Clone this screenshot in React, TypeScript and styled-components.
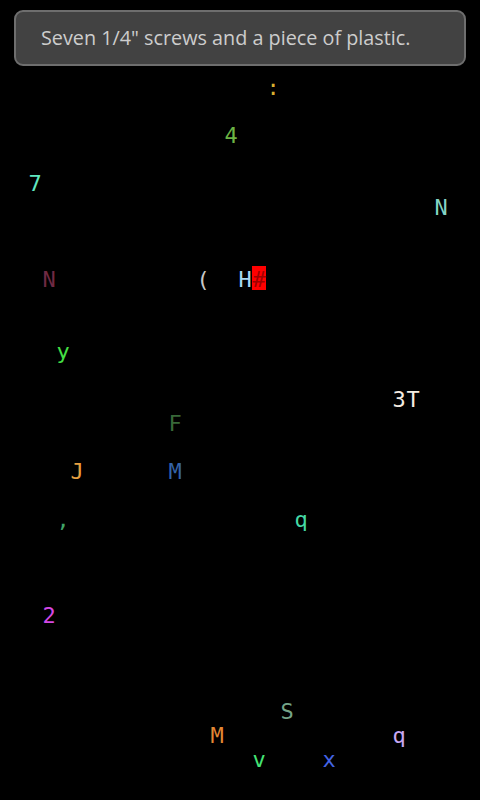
import React from 'react';
import styled, { createGlobalStyle } from 'styled-components';

interface Item {
  ch: string;
  col: number;
  row: number;
  color: string;
  kitten?: boolean;
}

const items: Item[] = [
  { ch: ':', col: 19, row: 3, color: '#d8b030' },
  { ch: '4', col: 16, row: 5, color: '#6cb444' },
  { ch: '7', col: 2, row: 7, color: '#60e8c0' },
  { ch: 'N', col: 31, row: 8, color: '#84d4c4' },
  { ch: 'N', col: 3, row: 11, color: '#702a44' },
  { ch: '(', col: 14, row: 11, color: '#c8c8c8' },
  { ch: 'H', col: 17, row: 11, color: '#a8d8f4' },
  { ch: '#', col: 18, row: 11, color: '#a00000', kitten: true },
  { ch: 'y', col: 4, row: 14, color: '#44e044' },
  { ch: '3', col: 28, row: 16, color: '#f4ece0' },
  { ch: 'T', col: 29, row: 16, color: '#f4ece0' },
  { ch: 'F', col: 12, row: 17, color: '#386838' },
  { ch: 'J', col: 5, row: 19, color: '#e8a040' },
  { ch: 'M', col: 12, row: 19, color: '#3464a8' },
  { ch: ',', col: 4, row: 21, color: '#40a468' },
  { ch: 'q', col: 21, row: 21, color: '#44d8a4' },
  { ch: '2', col: 3, row: 25, color: '#d448e4' },
  { ch: 'S', col: 20, row: 29, color: '#74a488' },
  { ch: 'M', col: 15, row: 30, color: '#e48834' },
  { ch: 'q', col: 28, row: 30, color: '#c8a8f4' },
  { ch: 'v', col: 18, row: 31, color: '#44e474' },
  { ch: 'x', col: 23, row: 31, color: '#4464e4' },
];

const App = () => {
  return (
    <Screen>
      <GlobalStyle />
      <Field>
        {items.map((it, i) => (
          <Cell key={i} $col={it.col} $row={it.row} $color={it.color} $kitten={it.kitten}>
            {it.ch}
          </Cell>
        ))}
      </Field>
      <Toast>Seven 1/4" screws and a piece of plastic.</Toast>
    </Screen>
  );
};

export default App;

const GlobalStyle = createGlobalStyle`
  html, body {
    margin: 0;
    padding: 0;
    background: #000;
  }
`;

const Screen = styled.div`
  position: relative;
  width: 480px;
  height: 800px;
  overflow: hidden;
  background: #000;
`;

const Field = styled.div`
  display: grid;
  grid-template-columns: repeat(34, 14px);
  grid-template-rows: repeat(33, 24px);
  padding-top: 2px;
`;

const Cell = styled.span<{ $col: number; $row: number; $color: string; $kitten?: boolean }>`
  grid-column: ${(p) => p.$col + 1};
  grid-row: ${(p) => p.$row + 1};
  display: flex;
  align-items: center;
  justify-content: center;
  padding-top: 4px;
  box-sizing: border-box;
  font-family: 'DejaVu Sans Mono', monospace;
  font-size: 22px;
  line-height: 24px;
  color: ${(p) => p.$color};
  background: ${(p) => (p.$kitten ? '#ff0000' : 'transparent')};
`;

const Toast = styled.div`
  position: absolute;
  top: 10px;
  left: 14px;
  width: 452px;
  height: 56px;
  box-sizing: border-box;
  display: flex;
  align-items: center;
  padding: 0 0 2px 25px;
  background: #424242;
  border: 2px solid #6e6e6e;
  border-radius: 9px;
  color: #cdcdcd;
  font-family: 'Open Sans', sans-serif;
  font-size: 19.8px;
`;
